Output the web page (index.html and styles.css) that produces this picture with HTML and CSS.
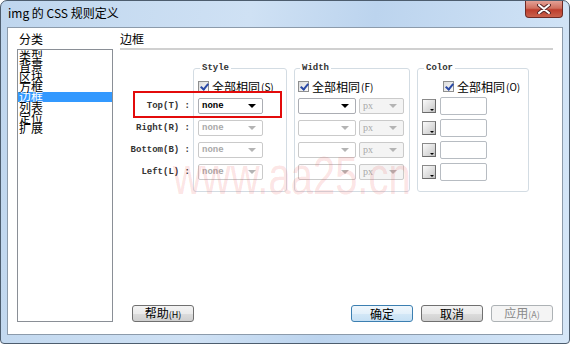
FILE: index.html
```html
<!DOCTYPE html>
<html lang="zh">
<head>
<meta charset="UTF-8">
<title>img 的 CSS 规则定义</title>
<link rel="stylesheet" href="styles.css">
</head>
<body>

<div class="window">
    <div class="titlebar">
        <span class="title">img 的 CSS 规则定义</span>
        <div class="close">
            <svg width="14" height="10" viewBox="0 0 14 10">
                <path d="M2 1 L12 9 M12 1 L2 9" stroke="#5a2a2a" stroke-width="4" stroke-linecap="round"/>
                <path d="M2 1 L12 9 M12 1 L2 9" stroke="#fff" stroke-width="2" stroke-linecap="round"/>
            </svg>
        </div>
    </div>

    <div class="client">
        <div class="side">
            <div class="cap">分类</div>
            <ul class="cats">
                <li>类型</li>
                <li>背景</li>
                <li>区块</li>
                <li>方框</li>
                <li class="active">边框</li>
                <li>列表</li>
                <li>定位</li>
                <li>扩展</li>
            </ul>
        </div>

        <div class="main">
            <div class="heading">边框</div>

            <div class="props">
                <div class="labels">
                    <div class="label">Top(T) :</div>
                    <div class="label">Right(R) :</div>
                    <div class="label">Bottom(B) :</div>
                    <div class="label">Left(L) :</div>
                </div>

                <fieldset class="group group-style">
                    <legend>Style</legend>
                    <div class="check"><span class="box"></span>全部相同<small>(S)</small></div>
                    <div class="row"><div class="select sel-style">none<i class="arrow"></i></div></div>
                    <div class="row"><div class="select sel-style off">none<i class="arrow"></i></div></div>
                    <div class="row"><div class="select sel-style off">none<i class="arrow"></i></div></div>
                    <div class="row"><div class="select sel-style off">none<i class="arrow"></i></div></div>
                </fieldset>

                <fieldset class="group group-width">
                    <legend>Width</legend>
                    <div class="check"><span class="box"></span>全部相同<small>(F)</small></div>
                    <div class="row">
                        <div class="select sel-width"><i class="arrow"></i></div>
                        <div class="select sel-unit off">px<i class="arrow"></i></div>
                    </div>
                    <div class="row">
                        <div class="select sel-width off"><i class="arrow"></i></div>
                        <div class="select sel-unit off">px<i class="arrow"></i></div>
                    </div>
                    <div class="row">
                        <div class="select sel-width off"><i class="arrow"></i></div>
                        <div class="select sel-unit off">px<i class="arrow"></i></div>
                    </div>
                    <div class="row">
                        <div class="select sel-width off"><i class="arrow"></i></div>
                        <div class="select sel-unit off">px<i class="arrow"></i></div>
                    </div>
                </fieldset>

                <fieldset class="group group-color">
                    <legend>Color</legend>
                    <div class="check"><span class="box"></span>全部相同<small>(O)</small></div>
                    <div class="row"><span class="swatch"></span><span class="field"></span></div>
                    <div class="row"><span class="swatch"></span><span class="field"></span></div>
                    <div class="row"><span class="swatch"></span><span class="field"></span></div>
                    <div class="row"><span class="swatch"></span><span class="field"></span></div>
                </fieldset>
            </div>

            <div class="actions">
                <button class="btn">帮助<small>(H)</small></button>
                <span class="spacer"></span>
                <button class="btn btn-default">确定</button>
                <button class="btn">取消</button>
                <button class="btn btn-off">应用<small>(A)</small></button>
            </div>
        </div>
    </div>

    <div class="marker"></div>
    <div class="watermark">www.aa25.cn</div>
</div>

</body>
</html>
```

FILE: styles.css
```css
body {
    margin: 0;
    background: #fff;
    font-family: "Noto Sans CJK SC", "Noto Sans", sans-serif;
    font-size: 12px;
}
.window {
    position: relative;
    width: 570px;
    height: 344px;
    box-sizing: border-box;
    border: 1px solid #4d5d6e;
    border-radius: 7px 7px 4px 4px;
    background: linear-gradient(100deg, #bfd6ee 0%, #cfe1f4 40%, #bcd4ee 60%, #d6e7f8 100%);
    padding: 0 6px 8px 6px;
    display: flex;
    flex-direction: column;
    overflow: hidden;
}
.titlebar {
    height: 26px;
    display: flex;
    align-items: flex-start;
}
.title {
    padding-left: 1px;
    line-height: 24px;
    color: #000;
}
.close {
    margin-left: auto;
    width: 38px;
    height: 17px;
    box-sizing: border-box;
    border: 1px solid #6e2a24;
    border-top: 0;
    border-radius: 0 0 4px 4px;
    background: linear-gradient(#e4a196, #d0705f 45%, #bd3d2c 55%, #c9614c);
    display: flex;
    align-items: center;
    justify-content: center;
}
.client {
    flex: 1;
    display: flex;
    background: #fff;
    border: 1px solid #8c9bab;
}

/* category list */
.side {
    width: 96px;
    padding: 4px 0 12px 9px;
    display: flex;
    flex-direction: column;
}
.cap {
    line-height: 14px;
    height: 14px;
    margin-bottom: 3px;
    padding-left: 2px;
}
.cats {
    flex: 1;
    margin: 0;
    padding: 1px 0 0 0;
    list-style: none;
    border: 1px solid #8a8f96;
}
.cats li {
    line-height: 10.3px;
    height: 10.3px;
    padding-left: 1px;
}
.cats li.active {
    background: #3399ff;
    color: #fff;
}

/* right side */
.main {
    flex: 1;
    margin: 0 9px 0 7px;
    padding-bottom: 12px;
    display: flex;
    flex-direction: column;
}
.heading {
    line-height: 14px;
    padding: 4px 0 2px 0;
    border-bottom: 2px solid #d0d0d0;
}
.props {
    display: flex;
    align-items: flex-start;
    margin-top: 13px;
}
.labels {
    width: 73px;
    padding-top: 35px;
}
.label,
legend,
.select {
    font-family: "Liberation Mono", "DejaVu Sans Mono", monospace;
    font-weight: bold;
    font-size: 9px;
}
.label {
    height: 16px;
    line-height: 16px;
    margin-bottom: 6px;
    text-align: right;
    padding-right: 3px;
    color: #333;
    white-space: pre;
}
.group {
    margin: 0;
    padding: 0 4px 11px 4px;
    border: 1px solid #d3dce3;
    border-radius: 3px;
    box-sizing: border-box;
}
.group legend {
    line-height: 10px;
    padding: 0 2px;
    margin-left: 2px;
    color: #333;
}
.group-style { width: 94px; }
.group-width { width: 116px; margin-left: 7px; padding-left: 3px; }
.group-color { width: 112px; margin-left: 7px; }

.check {
    height: 14px;
    margin-top: 6px;
    display: flex;
    align-items: center;
    white-space: nowrap;
    font-size: 12px;
}
.check small {
    font-size: 10px;
    margin-left: 1px;
}
.group-color .check { padding-left: 21px; }
.box {
    position: relative;
    width: 11px;
    height: 11px;
    box-sizing: border-box;
    border: 1px solid #8e8f8f;
    background: linear-gradient(135deg, #dcdcdc, #fafafa);
    margin-right: 3px;
}
.box::after {
    content: "";
    position: absolute;
    left: 3px;
    top: 0;
    width: 3px;
    height: 6px;
    border: solid #2a49a6;
    border-width: 0 2px 2px 0;
    transform: rotate(40deg);
}

.row {
    height: 16px;
    margin-top: 6px;
    display: flex;
    align-items: center;
}
.check + .row { margin-top: 5px; }

.select {
    position: relative;
    height: 16px;
    box-sizing: border-box;
    border: 1px solid #abadb3;
    border-radius: 2px;
    background: #fff;
    padding-left: 3px;
    line-height: 14px;
    color: #000;
}
.select.off {
    border-color: #cacaca;
    color: #a9a9a9;
}
.arrow {
    position: absolute;
    right: 6px;
    top: 5px;
    width: 0;
    height: 0;
    border-left: 4px solid transparent;
    border-right: 4px solid transparent;
    border-top: 4px solid #000;
}
.off .arrow { border-top-color: #b4b4b4; }
.sel-style { width: 65px; }
.sel-width { width: 58px; }
.sel-unit {
    width: 45px;
    margin-left: 3px;
    background: #f4f4f4;
    font-weight: normal;
    font-family: "Liberation Serif", serif;
    font-size: 10px;
}

.swatch {
    position: relative;
    width: 14px;
    height: 14px;
    box-sizing: border-box;
    border: 1px solid #8a8a8a;
    border-right-color: #6a6a6a;
    border-bottom-color: #6a6a6a;
    background: linear-gradient(135deg, #fbfbfb, #d6d6d6 70%, #bcbcbc);
    margin-right: 4px;
}
.swatch::after {
    content: "";
    position: absolute;
    right: 1px;
    bottom: 1px;
    border-left: 2px solid transparent;
    border-right: 2px solid transparent;
    border-top: 2px solid #000;
}
.field {
    width: 47px;
    height: 18px;
    box-sizing: border-box;
    border: 1px solid #b7bcc2;
    border-radius: 2px;
    background: #fff;
}

.actions {
    margin-top: auto;
    padding-left: 12px;
    display: flex;
    gap: 8px;
}
.spacer { flex: 1; }
.btn {
    width: 62px;
    height: 17px;
    padding: 0;
    border: 1px solid #707070;
    border-radius: 3px;
    background: linear-gradient(#f3f3f3, #ebebeb 50%, #dddddd 50%, #cfcfcf);
    font-family: "Noto Sans CJK SC", sans-serif;
    font-size: 12px;
    line-height: 14px;
    color: #000;
}
.btn small { font-size: 9px; }
.btn-default {
    border-color: #3c7fb1;
    background: linear-gradient(#f0f7fc, #e3f0fa 50%, #d4e8f7 50%, #c6e0f4);
}
.btn-off {
    border-color: #adb2b5;
    background: #f4f4f4;
    color: #8a8a8a;
}

/* red annotation over the Top row */
.marker {
    position: absolute;
    left: 132px;
    top: 90px;
    width: 149px;
    height: 27px;
    border: 2px solid #e30b0b;
    box-sizing: border-box;
}
.watermark {
    position: absolute;
    left: 172px;
    top: 144px;
    font-family: "Liberation Sans", sans-serif;
    font-size: 54px;
    line-height: 60px;
    color: rgba(235, 60, 60, 0.15);
    transform: scaleX(0.74);
    transform-origin: left top;
    pointer-events: none;
    white-space: nowrap;
}
```
